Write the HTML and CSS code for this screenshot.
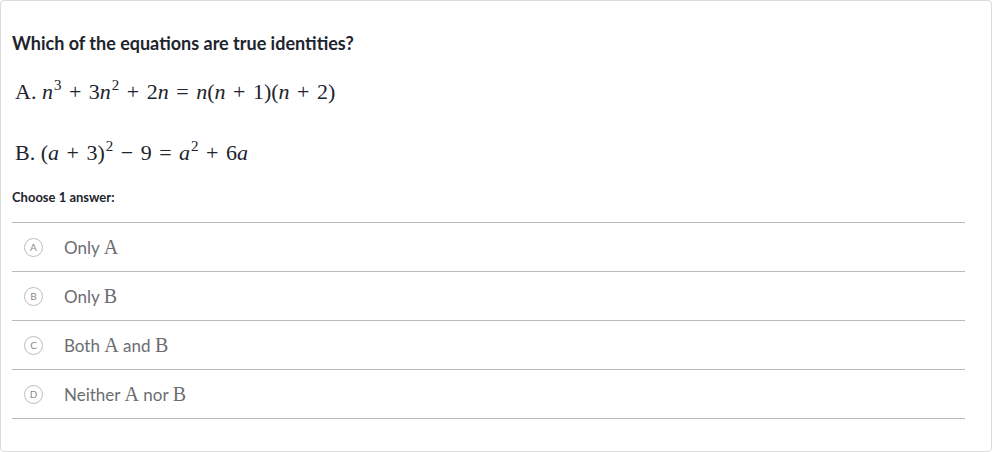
FILE: index.html
```html
<!DOCTYPE html>
<html>
<head>
<meta charset="utf-8">
<link rel="stylesheet" href="styles.css">
</head>
<body>
<div class="card">
  <h1 class="question">Which of the equations are true identities?</h1>
  <p class="eq"><span class="rm">A.</span> <span class="it">n</span><sup>3</sup> <span class="op">+</span> 3<span class="it">n</span><sup>2</sup> <span class="op">+</span> 2<span class="it">n</span> <span class="op">=</span> <span class="it">n</span>(<span class="it">n</span> <span class="op">+</span> 1)(<span class="it">n</span> <span class="op">+</span> 2)</p>
  <p class="eq eq-b"><span class="rm">B.</span> (<span class="it">a</span> <span class="op">+</span> 3)<sup>2</sup> <span class="op">−</span> 9 <span class="op">=</span> <span class="it">a</span><sup>2</sup> <span class="op">+</span> 6<span class="it">a</span></p>
  <div class="choose">Choose 1 answer:</div>
  <ul class="choices">
    <li class="choice"><span class="letter">A</span><span class="label">Only <span class="m">A</span></span></li>
    <li class="choice"><span class="letter">B</span><span class="label">Only <span class="m">B</span></span></li>
    <li class="choice"><span class="letter">C</span><span class="label">Both <span class="m">A</span> and <span class="m">B</span></span></li>
    <li class="choice"><span class="letter">D</span><span class="label">Neither <span class="m">A</span> nor <span class="m">B</span></span></li>
  </ul>
</div>
</body>
</html>
```
FILE: styles.css
```css
html, body {
  margin: 0;
  padding: 0;
  background: #ffffff;
}
body {
  font-family: Lato, "Noto Sans", sans-serif;
  color: #21242c;
}
.card {
  box-sizing: border-box;
  width: 992px;
  height: 452px;
  border: 1px solid #dcdcdc;
  border-radius: 4px;
  padding: 29px 26px 0 11px;
}
.question {
  margin: 0;
  font-size: 18px;
  font-weight: 700;
  line-height: 26px;
}
.eq {
  margin: 22px 0 0 3px;
  font-family: "Liberation Serif", "DejaVu Serif", serif;
  font-size: 22px;
  line-height: 28px;
  white-space: nowrap;
}
.eq-b {
  margin-top: 33px;
}
.eq .it {
  font-style: italic;
}
.eq .op {
  padding: 0 2px;
}
.eq .sp {
  margin-right: 1px;
}
.eq sup {
  font-size: 15px;
  line-height: 0;
  vertical-align: 9px;
  margin-left: 1px;
}
.choose {
  margin-top: 21px;
  font-size: 13px;
  font-weight: 700;
  line-height: 18px;
}
.choices {
  list-style: none;
  margin: 16px 0 0 0;
  padding: 0;
  border-top: 1px solid #babac2;
}
.choice {
  display: flex;
  align-items: center;
  height: 48px;
  border-bottom: 1px solid #babac2;
}
.letter {
  box-sizing: border-box;
  width: 19px;
  height: 19px;
  margin-left: 12px;
  border: 1.5px solid #bdbdbd;
  border-radius: 50%;
  display: flex;
  align-items: center;
  justify-content: center;
  font-size: 10px;
  color: #8a8a8a;
  font-weight: 400;
}
.label {
  margin-left: 21px;
  font-size: 17px;
  color: #6b6d72;
}
.label .m {
  font-family: "Liberation Serif", "DejaVu Serif", serif;
  font-size: 20px;
}
```
